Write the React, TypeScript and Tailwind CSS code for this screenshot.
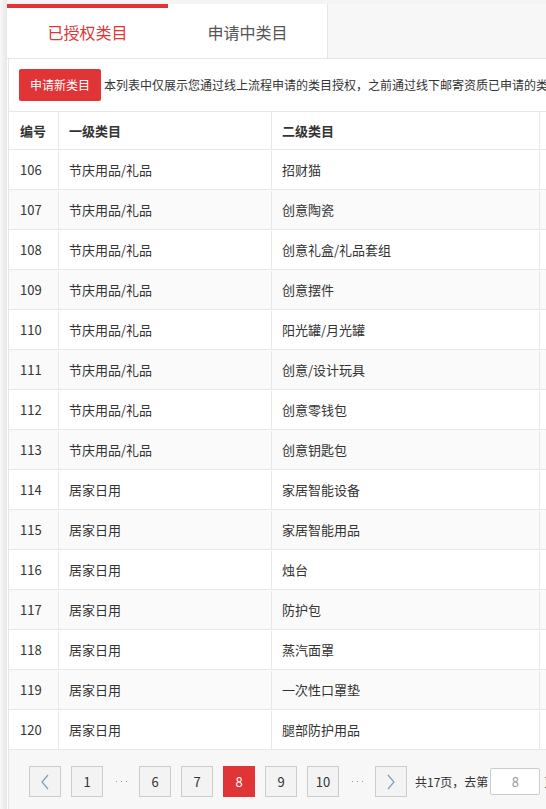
import React from 'react';

const rows: [number, string, string][] = [
  [106, '节庆用品/礼品', '招财猫'],
  [107, '节庆用品/礼品', '创意陶瓷'],
  [108, '节庆用品/礼品', '创意礼盒/礼品套组'],
  [109, '节庆用品/礼品', '创意摆件'],
  [110, '节庆用品/礼品', '阳光罐/月光罐'],
  [111, '节庆用品/礼品', '创意/设计玩具'],
  [112, '节庆用品/礼品', '创意零钱包'],
  [113, '节庆用品/礼品', '创意钥匙包'],
  [114, '居家日用', '家居智能设备'],
  [115, '居家日用', '家居智能用品'],
  [116, '居家日用', '烛台'],
  [117, '居家日用', '防护包'],
  [118, '居家日用', '蒸汽面罩'],
  [119, '居家日用', '一次性口罩垫'],
  [120, '居家日用', '腿部防护用品'],
];

const Chevron: React.FC<{ dir: 'left' | 'right' }> = ({ dir }) => (
  <svg width="10" height="16" viewBox="0 0 10 16" fill="none">
    <polyline
      points={dir === 'left' ? '8,1 2,8 8,15' : '2,1 8,8 2,15'}
      stroke="#7f9cc0"
      strokeWidth="1.2"
    />
  </svg>
);

const PageBtn: React.FC<{ children: React.ReactNode; active?: boolean }> = ({ children, active }) => (
  <div
    className={
      active
        ? 'w-[32px] h-[31px] shrink-0 flex items-center justify-center bg-[#e03436] text-white text-[13px]'
        : 'w-[32px] h-[31px] shrink-0 flex items-center justify-center bg-[#f3f3f3] border border-[#cccccc] text-[#333] text-[13px]'
    }
  >
    {children}
  </div>
);

const Dots: React.FC = () => (
  <div className="w-[16px] shrink-0 flex items-center justify-center gap-[4px]">
    <span className="w-[1px] h-[1px] bg-[#999]" />
    <span className="w-[1px] h-[1px] bg-[#999]" />
    <span className="w-[1px] h-[1px] bg-[#999]" />
  </div>
);

const App: React.FC = () => {
  return (
    <div
      className="flex h-[809px] w-[546px] overflow-hidden bg-white text-[#333]"
      style={{ fontFamily: '"Noto Sans CJK SC", "Noto Sans", sans-serif' }}
    >
      {/* left shadow strip */}
      <div className="w-[7px] shrink-0 bg-gradient-to-r from-[#f8f8f8] to-[#e7e7e7]" />

      <div className="flex-1 min-w-0 flex flex-col">
        {/* top strip */}
        <div className="h-[4px] shrink-0 bg-[#f4f4f4]" />

        {/* tabs */}
        <div className="h-[55px] shrink-0 flex bg-[#f7f7f7] border-b border-[#e6e6e6]">
          <div className="w-[161px] shrink-0 bg-white border-t-4 border-[#e03436] flex items-center justify-center text-[16px] text-[#e03436] pb-[2px]">
            已授权类目
          </div>
          <div className="w-[160px] shrink-0 bg-white border-r border-[#e6e6e6] flex items-center justify-center text-[16px] text-[#555] pt-[2px]">
            申请中类目
          </div>
        </div>

        {/* content */}
        <div className="flex-1 min-h-0 flex flex-col ml-[1px] border-l border-[#e6e6e6]">
          <div className="h-[52px] shrink-0 flex items-center pl-[10px] whitespace-nowrap">
            <div className="w-[82px] h-[32px] shrink-0 flex items-center justify-center bg-[#e03436] rounded-[2px] text-white text-[12px]">
              申请新类目
            </div>
            <span className="ml-[3px] text-[12px] text-[#333]">
              本列表中仅展示您通过线上流程申请的类目授权，之前通过线下邮寄资质已申请的类目授权请联系客服查询
            </span>
          </div>

          <div className="shrink-0 border-t border-[#e8e8e8]">
            <div className="flex h-[38px] border-b border-[#e8e8e8] text-[13px] font-semibold text-[#333]">
              <div className="w-[50px] shrink-0 flex items-center pl-[11px] border-r border-[#e8e8e8]">编号</div>
              <div className="w-[213px] shrink-0 flex items-center pl-[10px] border-r border-[#e8e8e8]">一级类目</div>
              <div className="w-[268px] shrink-0 flex items-center pl-[10px] border-r border-[#e8e8e8]">二级类目</div>
              <div className="w-[100px] shrink-0" />
            </div>
            {rows.map(([id, a, b], i) => (
              <div
                key={id}
                className={`flex h-[40px] border-b border-[#e8e8e8] text-[13px] text-[#333] pt-[1px] ${
                  i % 2 === 1 ? 'bg-[#fafafa]' : 'bg-white'
                }`}
              >
                <div className="w-[50px] shrink-0 flex items-center pl-[11px] border-r border-[#e8e8e8]">{id}</div>
                <div className="w-[213px] shrink-0 flex items-center pl-[10px] border-r border-[#e8e8e8]">{a}</div>
                <div className="w-[268px] shrink-0 flex items-center pl-[10px] border-r border-[#e8e8e8]">{b}</div>
                <div className="w-[100px] shrink-0" />
              </div>
            ))}
          </div>

          {/* pagination */}
          <div className="flex-1 bg-[#f7f7f7] pt-[16px] pl-[20px]">
            <div className="flex items-center gap-[10px] whitespace-nowrap">
              <PageBtn>
                <Chevron dir="left" />
              </PageBtn>
              <PageBtn>1</PageBtn>
              <Dots />
              <PageBtn>6</PageBtn>
              <PageBtn>7</PageBtn>
              <PageBtn active>8</PageBtn>
              <PageBtn>9</PageBtn>
              <PageBtn>10</PageBtn>
              <Dots />
              <PageBtn>
                <Chevron dir="right" />
              </PageBtn>
              <div className="flex items-center shrink-0 text-[12px] text-[#333] -ml-[2px]">
                <span>共17页，去第</span>
                <div className="ml-[2px] w-[50px] h-[27px] bg-white border border-[#cccccc] rounded-[2px] flex items-center justify-center text-[#999] text-[13px]">
                  8
                </div>
                <span className="ml-[4px]">页</span>
              </div>
            </div>
          </div>
        </div>
      </div>
    </div>
  );
};

export default App;
